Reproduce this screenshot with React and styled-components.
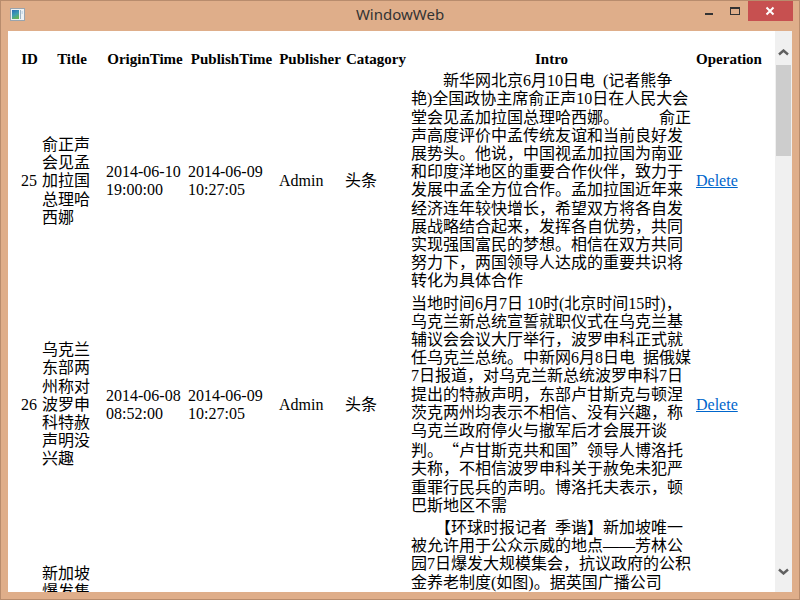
import React from "react";
import styled, { createGlobalStyle } from "styled-components";

const GlobalStyle = createGlobalStyle`
  html, body { margin: 0; padding: 0; background: #dfae8a; }
  #root { width: 800px; height: 600px; }
`;

const Window = styled.div`
  width: 800px;
  height: 600px;
  box-sizing: border-box;
  background: #dfae8a;
  border: 1px solid #b88c6d;
  display: flex;
  flex-direction: column;
  overflow: hidden;
`;

const TitleBar = styled.div`
  height: 30px;
  flex: none;
  display: grid;
  grid-template-columns: 1fr auto 1fr;
  align-items: start;
`;

const AppIcon = styled.svg`
  display: block;
  margin: 7px 0 0 9px;
`;

const Caption = styled.div`
  font-family: "Noto Sans", "Open Sans", sans-serif;
  font-size: 15px;
  line-height: 27px;
  color: #333;
`;

const Controls = styled.div`
  justify-self: end;
  display: flex;
  margin-right: 6px;
`;

const CaptionButton = styled.div`
  width: ${(p) => p.$w}px;
  height: 20px;
  background: ${(p) => p.$bg || "transparent"};
  svg { display: block; }
`;

const Client = styled.div`
  flex: 1;
  min-height: 0;
  margin: 0 7px 7px;
  background: #fff;
  display: flex;
  overflow: hidden;
`;

const Viewport = styled.div`
  flex: 1;
  min-width: 0;
  overflow: hidden;
`;

const Page = styled.div`
  padding: 16px 0 0 10px;
  font-family: "Liberation Serif", "Noto Sans CJK SC", serif;
  color: #000;
`;

const Table = styled.table`
  border-collapse: separate;
  border-spacing: 2px;
`;

const Th = styled.th`
  width: ${(p) => p.$w}px;
  padding: 1px;
  font-size: 15px;
  font-weight: bold;
  line-height: 18.2px;
  text-align: center;
  vertical-align: middle;
`;

const Td = styled.td`
  padding: 1px;
  font-size: 16px;
  line-height: 18.2px;
  text-align: left;
  vertical-align: middle;
`;

const Quote = styled.span`
  display: inline-block;
  width: 1em;
  font-family: "Noto Sans CJK SC", sans-serif;
  text-align: ${(p) => (p.$open ? "right" : "left")};
`;

const DeleteLink = styled.a`
  color: #0066cc;
  text-decoration: underline;
`;

const ScrollBar = styled.div`
  width: 17px;
  flex: none;
  background: #f0f0f0;
  display: flex;
  flex-direction: column;
`;

const ArrowButton = styled.div`
  height: 34px;
  box-sizing: border-box;
  display: flex;
  justify-content: center;
  align-items: center;
  padding: ${(p) => (p.$down ? "0 0 8px" : "8px 0 0")};
  svg { display: block; }
`;

const Thumb = styled.div`
  height: 91px;
  margin: 0 1px;
  background: #cdcdcd;
`;

const Track = styled.div`
  flex: 1;
`;

const columns = [
  ["ID", 17],
  ["Title", 60],
  ["OriginTime", 78],
  ["PublishTime", 87],
  ["Publisher", 62],
  ["Catagory", 62],
  ["Intro", 281],
  ["Operation", 66],
];

const rows = [
  {
    id: 25,
    title: "俞正声会见孟加拉国总理哈西娜",
    origin: ["2014-06-10", "19:00:00"],
    publish: ["2014-06-09", "10:27:05"],
    publisher: "Admin",
    cat: "头条",
    intro:
      "\u3000\u3000新华网北京6月10日电\u2002(记者熊争艳)全国政协主席俞正声10日在人民大会堂会见孟加拉国总理哈西娜。\u2002\u3000\u3000俞正声高度评价中孟传统友谊和当前良好发展势头。他说，中国视孟加拉国为南亚和印度洋地区的重要合作伙伴，致力于发展中孟全方位合作。孟加拉国近年来经济连年较快增长，希望双方将各自发展战略结合起来，发挥各自优势，共同实现强国富民的梦想。相信在双方共同努力下，两国领导人达成的重要共识将转化为具体合作",
  },
  {
    id: 26,
    title: "乌克兰东部两州称对波罗申科特赦声明没兴趣",
    origin: ["2014-06-08", "08:52:00"],
    publish: ["2014-06-09", "10:27:05"],
    publisher: "Admin",
    cat: "头条",
    intro: (
      <>
        当地时间6月7日 10时(北京时间15时)，乌克兰新总统宣誓就职仪式在乌克兰基辅议会会议大厅举行，波罗申科正式就任乌克兰总统。中新网6月8日电{"\u2002"}据俄媒7日报道，对乌克兰新总统波罗申科7日提出的特赦声明，东部卢甘斯克与顿涅茨克两州均表示不相信、没有兴趣，称乌克兰政府停火与撤军后才会展开谈判。
        <Quote $open>“</Quote>卢甘斯克共和国<Quote>”</Quote>
        领导人博洛托夫称，不相信波罗申科关于赦免未犯严重罪行民兵的声明。博洛托夫表示，顿巴斯地区不需
      </>
    ),
  },
  {
    id: 27,
    title: "新加坡爆发集会抗议政府公积金养老金制度",
    origin: ["2014-06-08", "09:15:00"],
    publish: ["2014-06-09", "10:27:05"],
    publisher: "Admin",
    cat: "头条",
    intro:
      "\u3000\u3000【环球时报记者\u2002季谐】新加坡唯一被允许用于公众示威的地点——芳林公园7日爆发大规模集会，抗议政府的公积金养老制度(如图)。据英国广播公司(BBC)报道，数千名新加坡人聚集在芳林公园，抗议政府的中央公积金制度，要求政府归还民众的公积金存款。这是新加坡近年来规模最大的一次抗议活动。集会组织者表示，现行的公积金制度让许多民众无法在退休时取回足够的养老金，呼吁政府进行改革，提高公积金管理的透明度。",
  },
];

function Chevron({ down }) {
  return (
    <svg width="11" height="7" viewBox="0 0 11 7">
      <polyline
        points={down ? "1,1.5 5.5,5.5 10,1.5" : "1,5.5 5.5,1.5 10,5.5"}
        fill="none"
        stroke="#606060"
        strokeWidth="2.4"
      />
    </svg>
  );
}

export default function App() {
  return (
    <>
      <GlobalStyle />
      <Window lang="zh-CN">
        <TitleBar>
          <AppIcon width="16" height="14" viewBox="0 0 16 14">
            <defs>
              <linearGradient id="ig" x1="0" y1="0" x2="0.4" y2="1">
                <stop offset="0" stopColor="#2a6fb8" />
                <stop offset="0.6" stopColor="#3f9fb0" />
                <stop offset="1" stopColor="#62b35a" />
              </linearGradient>
            </defs>
            <rect x="0.5" y="0.5" width="14" height="12" fill="#eef2f4" stroke="#9aa4ad" />
            <rect x="2" y="2" width="7" height="9" fill="url(#ig)" />
            <rect x="10" y="2" width="1" height="9" fill="#9fb4c4" />
            <rect x="11.5" y="3" width="1.5" height="3" fill="#c9dbe8" />
          </AppIcon>
          <Caption>WindowWeb</Caption>
          <Controls>
            <CaptionButton $w={26}>
              <svg width="26" height="20">
                <rect x="9" y="12" width="8" height="2" fill="#333" />
              </svg>
            </CaptionButton>
            <CaptionButton $w={26}>
              <svg width="26" height="20">
                <rect x="8.5" y="6.5" width="9" height="7" fill="none" stroke="#333" />
                <rect x="8" y="6" width="10" height="2" fill="#333" />
              </svg>
            </CaptionButton>
            <CaptionButton $w={45} $bg="#c75050">
              <svg width="45" height="20">
                <path d="M18.5 6.5 L25.5 13.5 M25.5 6.5 L18.5 13.5" stroke="#fff" strokeWidth="2" />
              </svg>
            </CaptionButton>
          </Controls>
        </TitleBar>
        <Client>
          <Viewport>
            <Page>
              <Table>
                <thead>
                  <tr>
                    {columns.map(([name, w]) => (
                      <Th key={name} $w={w}>
                        {name}
                      </Th>
                    ))}
                  </tr>
                </thead>
                <tbody>
                  {rows.map((r) => (
                    <tr key={r.id}>
                      <Td>{r.id}</Td>
                      <Td>{r.title}</Td>
                      <Td>
                        {r.origin[0]} {r.origin[1]}
                      </Td>
                      <Td>
                        {r.publish[0]} {r.publish[1]}
                      </Td>
                      <Td>{r.publisher}</Td>
                      <Td>{r.cat}</Td>
                      <Td>{r.intro}</Td>
                      <Td>
                        <DeleteLink href="#">Delete</DeleteLink>
                      </Td>
                    </tr>
                  ))}
                </tbody>
              </Table>
            </Page>
          </Viewport>
          <ScrollBar>
            <ArrowButton>
              <Chevron />
            </ArrowButton>
            <Thumb />
            <Track />
            <ArrowButton $down>
              <Chevron down />
            </ArrowButton>
          </ScrollBar>
        </Client>
      </Window>
    </>
  );
}
